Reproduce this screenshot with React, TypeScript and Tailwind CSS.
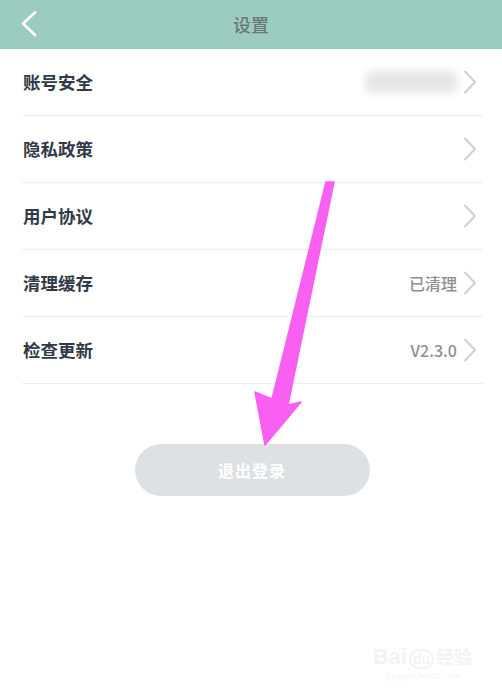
import React from "react";

type Row = { label: string; value?: string; blurred?: boolean };

const rows: Row[] = [
  { label: "账号安全", blurred: true },
  { label: "隐私政策" },
  { label: "用户协议" },
  { label: "清理缓存", value: "已清理" },
  { label: "检查更新", value: "V2.3.0" },
];

function Chevron() {
  return (
    <svg width="14" height="24" viewBox="0 0 14 24" fill="none" className="shrink-0">
      <path d="M2 1.5 L12 12 L2 22.5" stroke="#d0d0d0" strokeWidth="2" strokeLinecap="round" strokeLinejoin="round" />
    </svg>
  );
}

export default function App() {
  return (
    <div
      className="relative h-[691px] w-[502px] overflow-hidden bg-white"
      style={{ fontFamily: '"Noto Sans CJK SC", "Noto Sans", sans-serif' }}
    >
      <header className="relative flex h-[49px] items-center justify-center bg-[#9ccbc0]">
        <svg width="16" height="26" viewBox="0 0 16 26" fill="none" className="absolute left-[21px] top-[11px]">
          <path d="M14 1.5 L2 12.5 L14 24" stroke="#ffffff" strokeWidth="2.6" strokeLinecap="round" strokeLinejoin="round" />
        </svg>
        <span className="-mt-[1px] text-[18px] font-medium text-[#6a7a76]">设置</span>
      </header>

      <ul className="ml-[22px] w-[461px]">
        {rows.map((row) => (
          <li
            key={row.label}
            className="flex h-[67px] items-center justify-between border-b border-[#eeeeee] pr-[6px]"
          >
            <span className="pl-[1px] text-[17.5px] font-bold text-[#333a47]">{row.label}</span>
            <div className="flex items-center gap-[6px]">
              {row.blurred && (
                <div className="h-[22px] w-[92px] rounded-[6px] bg-[#e6e6e6] blur-[4px]" />
              )}
              {row.value && (
                <span className="text-[16px] font-medium text-[#8f8f8f]">{row.value}</span>
              )}
              <Chevron />
            </div>
          </li>
        ))}
      </ul>

      <div className="mt-[60px] flex justify-center">
        <button
          type="button"
          className="ml-[2px] h-[52px] w-[235px] rounded-full bg-[#dde1e3] text-[16px] font-bold tracking-[1px] text-white"
        >
          退出登录
        </button>
      </div>

      {/* annotation arrow */}
      <svg
        width="502"
        height="691"
        viewBox="0 0 502 691"
        className="pointer-events-none absolute left-0 top-0"
      >
        <polygon
          points="326,182 334,182 288,405 301,402 265,445 255,392 272,399"
          fill="#f960f1"
          stroke="#f960f1"
          strokeWidth="1.5"
          strokeLinejoin="round"
        />
      </svg>

      {/* faint watermark */}
      <div className="pointer-events-none absolute bottom-[10px] right-[30px] flex flex-col items-center text-[#f3f3f3]">
        <span className="text-[22px] font-bold leading-none" style={{ fontFamily: '"Liberation Sans", sans-serif' }}>
          Bai<span className="mx-[2px] rounded-full border-2 border-[#f3f3f3] px-[2px] text-[14px]">du</span>
          <span className="text-[18px]" style={{ fontFamily: '"Noto Sans CJK SC", sans-serif' }}>经验</span>
        </span>
        <span className="mt-[3px] text-[10px] italic leading-none" style={{ fontFamily: '"Liberation Serif", serif' }}>
          jingyan.baidu.com
        </span>
      </div>
    </div>
  );
}
